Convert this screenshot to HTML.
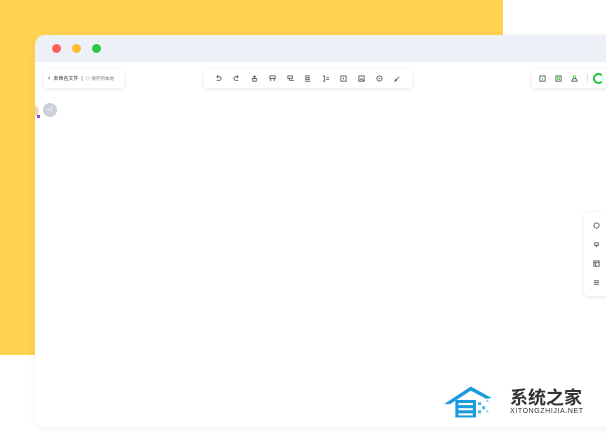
<!DOCTYPE html>
<html><head><meta charset="utf-8"><style>
*{margin:0;padding:0;box-sizing:border-box}
body{width:606px;height:433px;background:#fff;position:relative;overflow:hidden;font-family:"Liberation Sans","Noto Sans CJK SC",sans-serif}
.yel{position:absolute;left:0;top:0;width:503px;height:355px;background:#ffd24f}
.win{position:absolute;left:35px;top:35px;width:590px;height:392px;background:#fff;border-radius:10px;box-shadow:0 2px 8px rgba(0,0,0,.06);overflow:hidden}
.bar{height:27px;background:#eef0f7;position:relative}
.dot{position:absolute;top:9px;width:9px;height:9px;border-radius:50%}
.tb{position:absolute;background:#fff;border-radius:4px;box-shadow:0 1px 4px rgba(0,0,0,.1);display:flex;align-items:center}
svg{stroke:#555;fill:none;stroke-width:1}
</style></head><body>
<div class="yel"></div>
<div class="win">
<div class="bar">
<div class="dot" style="left:17px;background:#fe5f57"></div>
<div class="dot" style="left:37px;background:#febc2e"></div>
<div class="dot" style="left:57px;background:#28c840"></div>
</div>
<div class="tb" style="left:9px;top:34px;width:80px;height:19px;font-size:5px;color:#333;padding-left:4px;gap:3px">
<span style="font-size:7px">‹</span><span>未命名文件</span><span style="color:#333">|</span><span style="color:#777;font-size:4.5px">◎ 保存到本地</span></div>
<div class="tb" style="left:169px;top:34px;width:208px;height:19px;justify-content:space-around;padding:0 6px">
<svg width="7" height="7" viewBox="0 0 8 8"><path d="M2 2h3a2 2 0 010 4H2M2 2l1.5-1.5M2 2l1.5 1.5"/></svg>
<svg width="7" height="7" viewBox="0 0 8 8"><path d="M6 2H3a2 2 0 000 4h3M6 2L4.5.5M6 2L4.5 3.5"/></svg>
<svg width="7" height="7" viewBox="0 0 8 8"><path d="M1 4h6M2 4v3h4V4M4 1v3M2.5 2.5L4 1l1.5 1.5"/></svg>
<svg width="7" height="7" viewBox="0 0 8 8"><path d="M1 1h6v3H1zM2 4v3M6 4v3"/></svg>
<svg width="7" height="7" viewBox="0 0 8 8"><path d="M1 1h5v3H1zM3 4v2h3M6 6h2"/></svg>
<svg width="7" height="7" viewBox="0 0 8 8"><path d="M1 1h6M1 7h6M2 3h4v2H2z"/></svg>
<svg width="7" height="7" viewBox="0 0 8 8"><path d="M1 1h2v6H1M5 3h3M5 5h3"/></svg>
<svg width="7" height="7" viewBox="0 0 8 8"><path d="M1 1h6v6H1zM4 3v2"/></svg>
<svg width="7" height="7" viewBox="0 0 8 8"><path d="M1 1h6v6H1zM2 6l2-2 3 3"/></svg>
<svg width="7" height="7" viewBox="0 0 8 8"><circle cx="4" cy="4" r="3"/><path d="M3 4h2"/></svg>
<svg width="7" height="7" viewBox="0 0 8 8"><path d="M2 6l4-4M1 7l2-1-1-1z"/></svg>
</div>
<div class="tb" style="left:497px;top:34px;width:90px;height:19px;gap:9px;padding-left:7px">
<svg width="7" height="7" viewBox="0 0 8 8"><path d="M1 1h6v6H1z"/><path d="M4 3v3" stroke="#3c3"/></svg>
<svg width="7" height="7" viewBox="0 0 8 8"><path d="M1 1h6v6H1z"/><path d="M3 3h2v2H3z" stroke="#3c3"/></svg>
<svg width="7" height="7" viewBox="0 0 8 8"><circle cx="4" cy="2.5" r="1.5" stroke="#3c3"/><path d="M1 7a3 3 0 016 0z"/></svg>
<span style="width:1px;height:9px;background:#ddd;margin-left:0px"></span>
<div style="width:11px;height:11px;border-radius:50%;border:2px solid #27c744;border-right-color:#cfe;margin-left:-4px"></div>
</div>
<div style="position:absolute;left:-4px;top:71px;width:8px;height:10px;border-radius:50%;background:#e8d5c5"></div>
<div style="position:absolute;left:2px;top:80px;width:3px;height:3px;background:#8a4ae0"></div>
<div style="position:absolute;left:8px;top:68px;width:14px;height:14px;border-radius:50%;background:#ccd0d8;color:#fff;font-size:5px;text-align:center;line-height:14px">+2</div>
<div class="tb" style="left:549px;top:177px;width:24px;height:84px;flex-direction:column;justify-content:space-around;padding:4px 0">
<svg width="7" height="7" viewBox="0 0 8 8"><circle cx="4" cy="4" r="3"/></svg>
<svg width="7" height="7" viewBox="0 0 8 8"><path d="M2 2h4v3H2zM4 5v2"/></svg>
<svg width="7" height="7" viewBox="0 0 8 8"><path d="M1 1h6v6H1zM1 3h6M3 3v4"/></svg>
<svg width="7" height="7" viewBox="0 0 8 8"><path d="M1 2h6M1 4h6M1 6h6"/></svg>
</div>
</div>
<svg style="position:absolute;left:444px;top:383px;stroke:none" width="66" height="38" viewBox="0 0 64 36">
<path d="M0 20L26 3l20 11-5 1-15-8L6 20z" fill="#1a9be0"/>
<rect x="11" y="16" width="20" height="17" fill="#1a9be0"/>
<rect x="14" y="19" width="14" height="2" fill="#fff"/><rect x="14" y="24" width="14" height="2" fill="#fff"/><rect x="14" y="29" width="14" height="2" fill="#fff"/>
<rect x="33" y="18" width="3" height="3" fill="#4bb5ef"/><rect x="37" y="22" width="3" height="3" fill="#4bb5ef"/><rect x="33" y="26" width="3" height="3" fill="#4bb5ef"/><rect x="41" y="16" width="2" height="2" fill="#8ccff5"/><rect x="41" y="26" width="2" height="2" fill="#8ccff5"/>
</svg>
<div style="position:absolute;left:510px;top:384px;font-size:18px;font-weight:bold;color:#333">系统之家</div>
<div style="position:absolute;left:510px;top:408px;font-size:7px;color:#333;letter-spacing:.6px">XITONGZHIJIA.NET</div>
</body></html>
